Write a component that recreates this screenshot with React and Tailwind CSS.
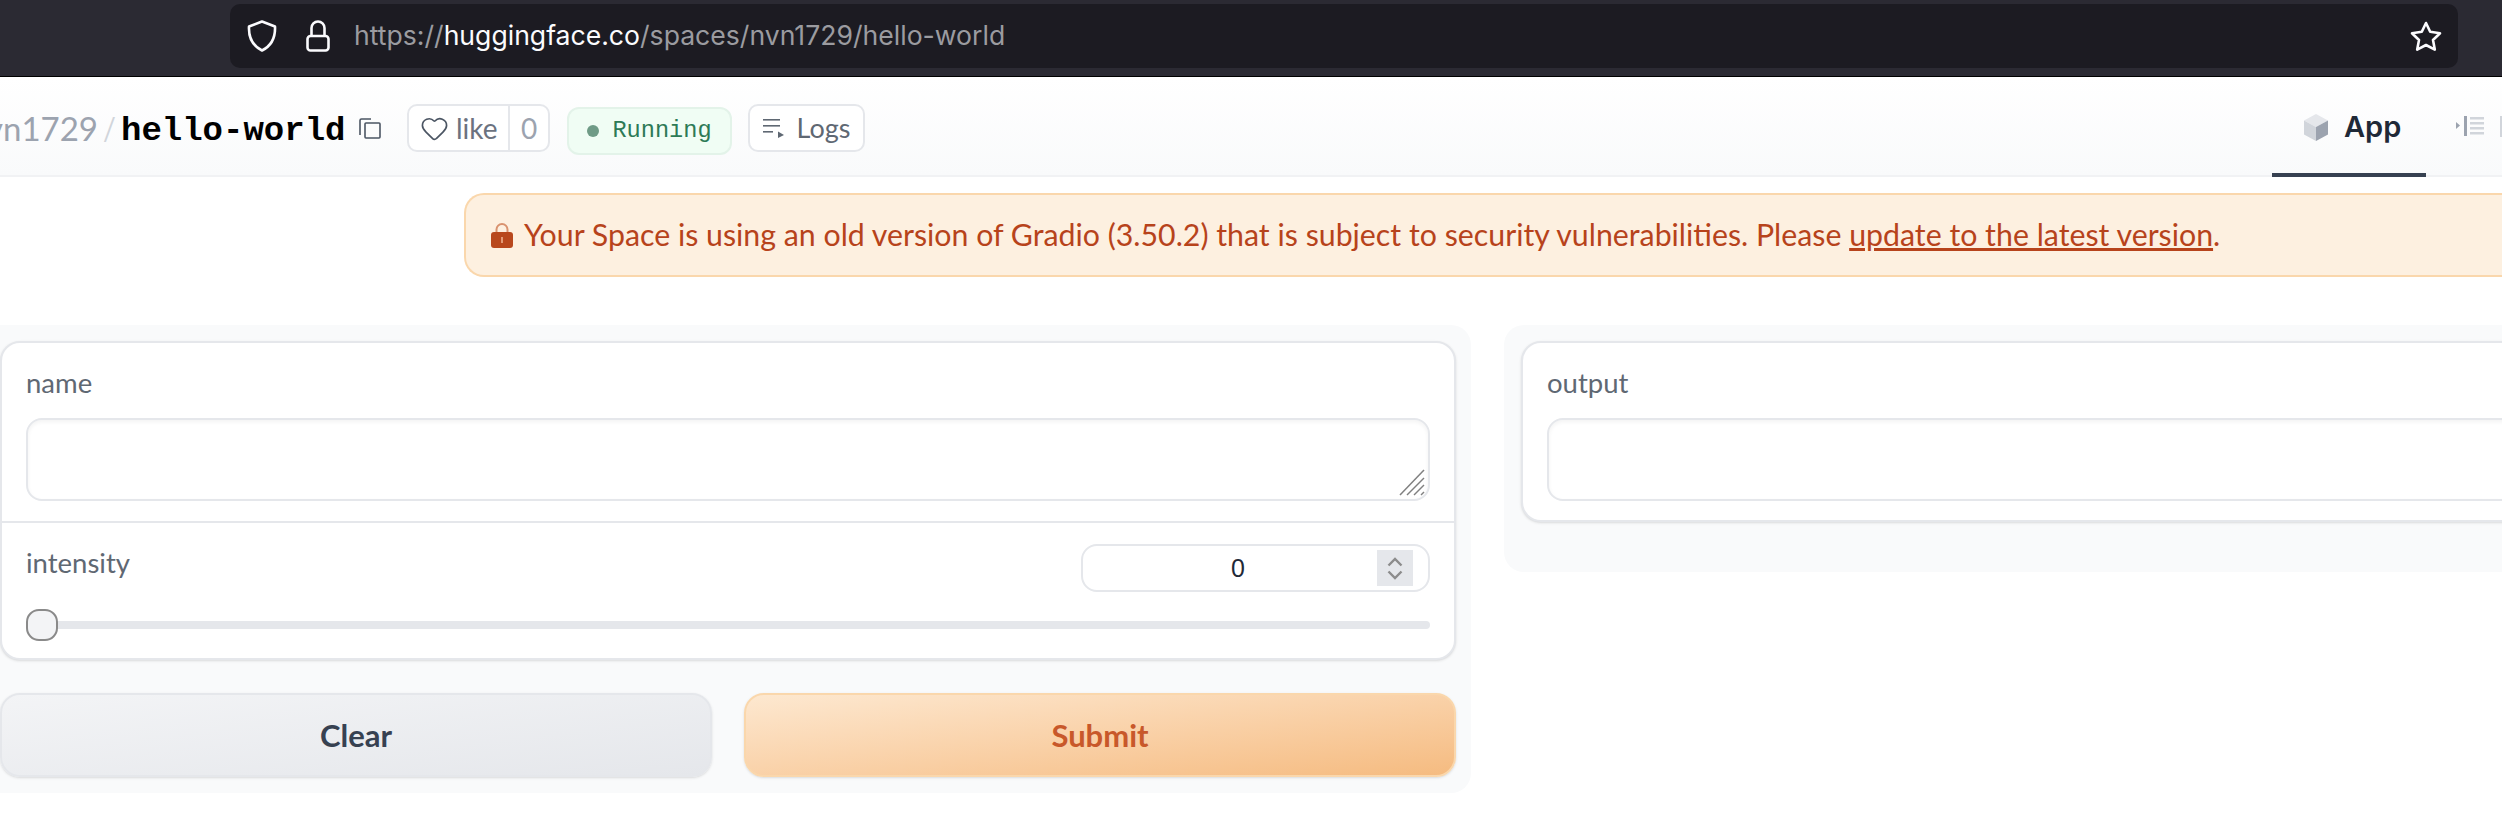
import { Heart } from 'lucide-react';

const sans = "font-['Lato','Noto_Sans',sans-serif]";

function ShieldIcon() {
    return <svg width="30" height="32" viewBox="0 0 30 32" fill="none" stroke="#fbfbfe" strokeWidth="2.6" strokeLinejoin="round">
        <path d="M15 1.5 L28 6.5 C28.5 17 25 25.5 15 30.5 C5 25.5 1.5 17 2 6.5 Z" />
    </svg>
}

function LockIcon() {
    return <svg width="24" height="32" viewBox="0 0 24 32" fill="none" stroke="#fbfbfe" strokeWidth="2.6">
        <rect x="1.5" y="16" width="21" height="14.5" rx="3" />
        <path d="M5.5 16 V8 a6.5 6.5 0 0 1 13 0 V16" />
    </svg>
}

function StarIcon() {
    return <svg width="32" height="31" viewBox="0 0 32 31" fill="none" stroke="#fbfbfe" strokeWidth="2.6" strokeLinejoin="round">
        <path d="M16 2 L20.2 10.8 L30 12.2 L23 19 L24.8 28.6 L16 24 L7.2 28.6 L9 19 L2 12.2 L11.8 10.8 Z" />
    </svg>
}

function CopyIcon() {
    return <svg width="22" height="21" viewBox="0 0 22 21" fill="none" stroke="#4b5563" strokeWidth="1.6">
        <path d="M3 17 V2.5 Q3 1 4.5 1 H14" transform="translate(-2 0)" />
        <rect x="6" y="5" width="15" height="15" rx="1" />
    </svg>
}

function LogsIcon() {
    return <svg width="21" height="19" viewBox="0 0 21 19" fill="#5f6873">
        <rect x="0" y="0" width="17" height="1.6" />
        <rect x="0" y="6" width="17" height="1.6" />
        <rect x="0" y="12" width="10" height="1.6" />
        <path d="M15 12.5 L21 16 L15 19 Z" />
    </svg>
}

function CubeIcon() {
    return <svg width="24" height="27" viewBox="0 0 24 27">
        <path d="M12 0 L24 6.5 L12 13 L0 6.5 Z" fill="#e5e7eb" />
        <path d="M0 6.5 L12 13 V27 L0 20.5 Z" fill="#d1d5db" />
        <path d="M24 6.5 L12 13 V27 L24 20.5 Z" fill="#9ca3af" />
    </svg>
}

function FilesIcon() {
    return <svg width="28" height="20" viewBox="0 0 28 20">
        <path d="M0 6 L4 9.5 L0 13 Z" fill="#9ca3af" />
        <rect x="8" y="0" width="3" height="20" fill="#9ca3af" />
        <rect x="14" y="1" width="14" height="2.5" fill="#d1d5db" />
        <rect x="14" y="6" width="14" height="2.5" fill="#d1d5db" />
        <rect x="14" y="11" width="14" height="2.5" fill="#d1d5db" />
        <rect x="14" y="16" width="14" height="2.5" fill="#d1d5db" />
    </svg>
}

function SmallLock() {
    return <svg width="22" height="26" viewBox="0 0 22 26">
        <path d="M5.5 11 V7.5 a5.5 5.5 0 0 1 11 0 V11" fill="none" stroke="#d9926f" strokeWidth="2" />
        <rect x="0" y="10" width="22" height="16" rx="3" fill="#b8481d" />
        <rect x="10" y="15" width="2" height="6" fill="#e39a76" />
    </svg>
}

function ResizeHandle() {
    return <svg className="absolute right-[3px] bottom-[3px]" width="26" height="27" viewBox="0 0 26 27" stroke="#808080" strokeWidth="1.5">
        <path d="M1 26 L25 1" />
        <path d="M8 26 L25 9" />
        <path d="M15 26 L25 16" />
        <path d="M22 26 L25 23" />
    </svg>
}

function Spinner() {
    return <div className="w-[36px] h-[36px] bg-[#e5e7eb] flex flex-col items-center justify-center gap-[3px]">
        <svg width="16" height="10" viewBox="0 0 16 10" fill="none" stroke="#8c8c8c" strokeWidth="2.4"><path d="M1.5 8.5 L8 2 L14.5 8.5" /></svg>
        <svg width="16" height="10" viewBox="0 0 16 10" fill="none" stroke="#8c8c8c" strokeWidth="2.4"><path d="M1.5 1.5 L8 8 L14.5 1.5" /></svg>
    </div>
}

function BrowserBar() {
    return <div className="h-[77px] shrink-0 bg-[#2b2a33] border-b border-black pt-[4px] pl-[230px] pr-[44px]">
        <div className="h-[64px] rounded-[10px] bg-[#1c1b22] flex items-center pl-[17px] pr-[16px]">
            <ShieldIcon />
            <div className="ml-[29px]"><LockIcon /></div>
            <div className="ml-[24px] font-['Inter',sans-serif] text-[26.6px] text-[#9b9ba0] whitespace-nowrap">
                https://<span className="text-[#fbfbfe]">huggingface.co</span>/spaces/nvn1729/hello-world
            </div>
            <div className="ml-auto"><StarIcon /></div>
        </div>
    </div>
}

function SpaceHeader() {
    return <div className="h-[100px] shrink-0 flex items-start bg-gradient-to-b from-white to-[#f9fafb] border-b-2 border-[#f1f2f4]">
        <div className="flex items-center h-[98px]">
            <div className={`mt-[6px] w-[98px] overflow-hidden flex justify-end text-[33px] text-[#9ca3af] ${sans}`}>nvn1729</div>
            <div className="mt-[6px] w-[23px] text-center text-[34px] text-[#d1d5db] font-light">/</div>
            <div className="mt-[10px] w-[225px] font-['Liberation_Mono',monospace] font-bold text-[34px] text-black">hello-world</div>
            <div className="mt-[5px] ml-[13px]"><CopyIcon /></div>
            <div className={`mt-[4px] ml-[26px] h-[48px] w-[143px] rounded-[10px] border-2 border-[#e5e7eb] bg-white flex items-center text-[28px] text-[#6b7280] ${sans}`}>
                <div className="w-[101px] h-full flex items-center pl-[11px] gap-[7px] border-r-2 border-[#e5e7eb]">
                    <Heart size={29} strokeWidth={1.4} color="#4b5563" />
                    <span>like</span>
                </div>
                <div className="flex-1 text-center text-[#9ca3af]">0</div>
            </div>
            <div className="ml-[17px] mt-[10px] h-[48px] w-[165px] rounded-[12px] border-2 border-[#e3f3e9] bg-[#f0fdf4] flex items-center justify-center gap-[13px] font-['Liberation_Mono',monospace] text-[23.6px] text-[#2d7a56]">
                <span className="w-[12px] h-[12px] rounded-full bg-[#6f9b86]" />
                Running
            </div>
            <div className={`mt-[4px] ml-[16px] h-[48px] w-[117px] rounded-[10px] border-2 border-[#e5e7eb] bg-white flex items-center justify-center gap-[13px] text-[27px] text-[#5f6873] ${sans}`}>
                <LogsIcon />
                Logs
            </div>
        </div>
        <div className="ml-auto flex items-stretch h-[100px]">
            <div className="w-[154px] flex items-center pl-[32px] pt-[4px] gap-[16px] font-['Inter',sans-serif] font-semibold text-[29px] text-[#1f2937] border-b-4 border-[#374151]">
                <CubeIcon />
                App
            </div>
            <div className="ml-[30px] flex items-center gap-[16px] pb-[2px]">
                <FilesIcon />
                <div className="w-[2px] h-[21px] bg-[#d1d5db]" />
            </div>
        </div>
    </div>
}

function Notice() {
    return <div className="pl-[464px] pt-[16px] shrink-0">
        <div className={`w-[2200px] h-[84px] rounded-l-[20px] border-2 border-r-0 border-[#fad7ac] bg-[#fdf0e0] flex items-center gap-[11px] pl-[25px] text-[30.3px] text-[#b7431b] ${sans}`}>
            <SmallLock />
            <span className="whitespace-nowrap">Your Space is using an old version of Gradio (3.50.2) that is subject to security vulnerabilities. Please <span className="underline">update to the latest version</span>.</span>
        </div>
    </div>
}

function Card({ label, handle }) {
    return <div className="px-[24px] pt-[21px] pb-[20px]">
        <div className={`text-[27.5px] leading-[38px] text-[#5f6873] ${sans}`}>{label}</div>
        <div className="relative mt-[16px] h-[83px] rounded-[16px] border-2 border-[#e5e7eb] bg-white shadow-[inset_0_2px_4px_rgba(0,0,0,0.05)]">
            {handle && <ResizeHandle />}
        </div>
    </div>
}

function Form() {
    return <div className="w-[1471px] shrink-0 h-[468px] bg-[#f9fafb] rounded-r-[20px] pt-[16px]">
        <div className="w-[1456px] h-[319px] rounded-[20px] border-2 border-[#e5e7eb] bg-white shadow-sm">
            <Card label="name" handle />
            <div className="border-t-2 border-[#e5e7eb] px-[24px] pt-[21px]">
                <div className="flex items-start justify-between">
                    <div className={`text-[27.5px] leading-[38px] text-[#5f6873] ${sans}`}>intensity</div>
                    <div className="w-[349px] h-[48px] rounded-[16px] border-2 border-[#e5e7eb] bg-white flex items-center pr-[15px]">
                        <div className="flex-1 pl-[16px] pt-[2px] text-center font-['Liberation_Sans',sans-serif] text-[25px] text-[#1f2937]">0</div>
                        <Spinner />
                    </div>
                </div>
                <div className="relative mt-[29px] h-[8px] rounded-full bg-[#e5e7eb]">
                    <div className="absolute left-0 -top-[12px] w-[32px] h-[32px] rounded-[13px] border-2 border-[#8a8a8a] bg-[#f3f4f6]" />
                </div>
            </div>
        </div>
        <div className={`mt-[33px] w-[1456px] flex gap-[32px] text-[31px] font-bold ${sans}`}>
            <div className="flex-1 h-[84px] rounded-[20px] border-2 border-[#e5e7eb] bg-gradient-to-br from-[#f3f4f6] to-[#e5e7eb] flex items-center justify-center text-[#374151] shadow-sm">Clear</div>
            <div className="flex-1 h-[84px] rounded-[20px] border-2 border-[#fad7ac] bg-gradient-to-br from-[#fde8d0] to-[#f5bb80] flex items-center justify-center text-[#c8582a] shadow-sm">Submit</div>
        </div>
    </div>
}

function Output() {
    return <div className="flex-1 ml-[33px] h-[247px] bg-[#f9fafb] rounded-l-[20px] pt-[16px] pl-[17px]">
        <div className="w-[1200px] h-[181px] rounded-[20px] border-2 border-[#e5e7eb] bg-white shadow-sm">
            <Card label="output" />
        </div>
    </div>
}

export default function App() {
    return <div className="w-[2502px] h-[822px] overflow-hidden bg-white flex flex-col">
        <BrowserBar />
        <SpaceHeader />
        <Notice />
        <div className="flex items-start mt-[48px]">
            <Form />
            <Output />
        </div>
    </div>
}
